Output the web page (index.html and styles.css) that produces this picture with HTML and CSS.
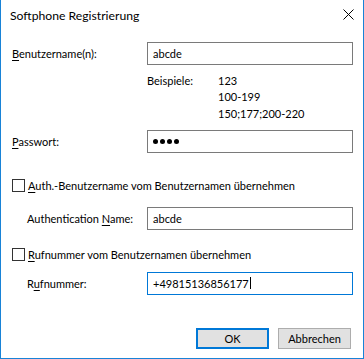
FILE: index.html
```html
<!DOCTYPE html>
<html lang="de">
<head>
<meta charset="utf-8">
<title>Softphone Registrierung</title>
<link rel="stylesheet" href="styles.css">
</head>
<body>
<div class="dialog">
  <div class="titlebar">
    <span class="title">Softphone Registrierung</span>
    <svg class="close" width="11" height="11" viewBox="0 0 11 11"><path d="M0.5 0.5 L10.5 10.5 M10.5 0.5 L0.5 10.5" stroke="#000" stroke-width="1" fill="none"/></svg>
  </div>
  <div class="content">
    <div class="row r-user">
      <span class="lbl"><u>B</u>enutzername(n):</span>
      <div class="input"><span>abcde</span></div>
    </div>
    <div class="examples">
      <span>Beispiele:</span><span>123</span>
      <span></span><span>100-199</span>
      <span></span><span>150;177;200-220</span>
    </div>
    <div class="row r-pass">
      <span class="lbl"><u>P</u>asswort:</span>
      <div class="input"><span class="dots"><i></i><i></i><i></i><i></i></span></div>
    </div>
    <div class="check r-check1">
      <span class="box"></span>
      <span><u>A</u>uth.-Benutzername vom Benutzernamen übernehmen</span>
    </div>
    <div class="row indent r-auth">
      <span class="lbl">Authentication <u>N</u>ame:</span>
      <div class="input"><span>abcde</span></div>
    </div>
    <div class="check r-check2">
      <span class="box"></span>
      <span><u>R</u>ufnummer vom Benutzernamen übernehmen</span>
    </div>
    <div class="row indent r-num">
      <span class="lbl">R<u>u</u>fnummer:</span>
      <div class="input focus"><span>+49815136856177</span><span class="caret"></span></div>
    </div>
    <div class="buttons">
      <button class="btn default">OK</button>
      <button class="btn">Abbrechen</button>
    </div>
  </div>
</div>
</body>
</html>
```

FILE: styles.css
```css
* { box-sizing: border-box; }
html, body { margin: 0; padding: 0; background: #fff; }
body {
  font-family: Lato, "Noto Sans", sans-serif;
  font-size: 11px;
  color: #000;
}
.dialog {
  width: 364px;
  height: 359px;
  border: 1px solid #1883d7;
  border-top: none;
  background: #fff;
  display: flex;
  flex-direction: column;
}
.titlebar {
  height: 31px;
  display: flex;
  align-items: center;
  justify-content: space-between;
  padding-left: 9px;
  padding-right: 9px;
  padding-bottom: 1px;
}
.title {
  font-size: 12.2px;
}
.close { display: block; margin-top: -1px; }
.content {
  padding-left: 11px;
  display: flex;
  flex-direction: column;
}
u { text-decoration: underline; text-underline-offset: 2px; text-decoration-thickness: 1px; }
.row {
  display: flex;
  align-items: center;
  height: 23px;
}
.lbl { width: 135px; flex: none; }
.indent .lbl { width: 120px; margin-left: 15px; }
.input {
  width: 206px;
  height: 23px;
  border: 1px solid #7a7a7a;
  display: flex;
  align-items: center;
  padding-left: 5px;
  padding-bottom: 1px;
}
.input.focus { border-color: #0078d7; }
.caret {
  width: 1px;
  height: 12px;
  background: #000;
  margin-left: 1px;
}
.dots { display: flex; gap: 2px; }
.dots i { display: block; width: 5px; height: 5px; border-radius: 50%; background: #000; }
.r-user { margin-top: 11px; }
.examples {
  margin-top: 8px;
  margin-left: 135px;
  display: grid;
  grid-template-columns: 71px auto;
  grid-template-rows: 16px 17px 16px;
  line-height: 16px;
}
.r-pass { margin-top: 8px; }
.check {
  display: flex;
  align-items: center;
  height: 13px;
  gap: 3px;
}
.box {
  width: 13px;
  height: 13px;
  border: 1px solid #333;
  background: #fff;
  flex: none;
}
.r-check1 { margin-top: 26px; }
.r-auth { margin-top: 15px; }
.r-check2 { margin-top: 18px; }
.r-num { margin-top: 11px; }
.buttons {
  margin-top: 33px;
  display: flex;
  justify-content: flex-end;
  gap: 9px;
  padding-right: 12px;
}
.btn {
  width: 73px;
  height: 21px;
  font: inherit;
  color: #000;
  background: #e1e1e1;
  border: 1px solid #adadad;
  padding: 0;
  margin: 0;
}
.btn.default { border: 2px solid #0078d7; }
```
